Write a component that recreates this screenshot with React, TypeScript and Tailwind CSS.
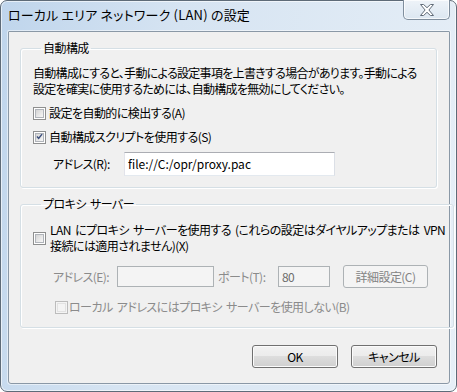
import React from "react";

type BoxProps = {
    checked?: boolean;
    disabled?: boolean;
};

function CheckBox({ checked, disabled }: BoxProps) {
    return (
        <span
            className={`flex h-[13px] w-[13px] shrink-0 items-center justify-center border ${
                disabled ? "border-[#bcbcbc] bg-[#f4f4f4]" : "border-[#8e8f8f] bg-white"
            }`}
        >
            <span
                className={`flex h-[9px] w-[9px] items-center justify-center border ${
                    disabled
                        ? "border-[#e2e2e2] bg-[#f4f4f4]"
                        : "border-[#b0b4ba] bg-[linear-gradient(135deg,#d4d4d4,#f7f7f7)]"
                }`}
            >
                {checked && (
                    <svg width="9" height="9" viewBox="0 0 9 9" className="-mt-[1px]">
                        <path
                            d="M1.2 4.6 L3.4 6.9 L7.8 1.4"
                            fill="none"
                            stroke="#3c4f7c"
                            strokeWidth="1.9"
                        />
                    </svg>
                )}
            </span>
        </span>
    );
}

function Button({ label, disabled, className = "" }: { label: string; disabled?: boolean; className?: string }) {
    return (
        <div
            className={`flex items-center justify-center rounded-[3px] border text-[12px] ${
                disabled
                    ? "border-[#adb2b5] bg-[#f4f4f4] text-[#838383]"
                    : "border-[#707070] bg-[linear-gradient(#f2f2f2_0%,#ebebeb_50%,#dddddd_50%,#cfcfcf_100%)] text-black shadow-[inset_0_0_0_1px_#fbfbfb]"
            } ${className}`}
        >
            {label}
        </div>
    );
}

function App() {
    return (
        <div className="h-[392px] w-[457px] font-['Noto_Sans_CJK_JP',sans-serif] [font-feature-settings:'palt'] text-[12px] leading-[16px] text-black">
            <div className="flex h-full w-full flex-col rounded-[7px] border border-[#5e6b78] bg-[linear-gradient(100deg,#bfd5ec_0%,#d6e4f2_35%,#e7eff7_100%)] pb-[7px] pl-[7px] pr-[6px] shadow-[inset_0_0_0_1px_rgba(255,255,255,0.6)]">
                {/* title bar */}
                <div className="flex h-[30px] shrink-0 items-start justify-between">
                    <div className="whitespace-nowrap pt-[5px] text-[13px] leading-[18px] tracking-[0.2px] text-black">
                        ローカル エリア ネットワーク (LAN) の設定
                    </div>
                    <div className="-mt-[1px] flex h-[20px] w-[47px] items-center justify-center rounded-b-[5px] border border-t-0 border-[#7f8e9d] bg-[linear-gradient(#eef3f8,#dce7f1)] shadow-[inset_0_0_0_1px_rgba(255,255,255,0.7)]">
                        <svg width="14" height="12" viewBox="0 0 14 12">
                            <polygon
                                points="0.5,0.5 3.6,0.5 7,3.7 10.4,0.5 13.5,0.5 8.9,6 13.5,11.5 10.4,11.5 7,8.3 3.6,11.5 0.5,11.5 5.1,6"
                                fill="#ffffff"
                                stroke="#606b77"
                                strokeWidth="1"
                            />
                        </svg>
                    </div>
                </div>

                {/* client area */}
                <div className="flex flex-1 flex-col whitespace-nowrap rounded-b-[3px] rounded-t-[1px] border border-[#8a98a6] bg-[#f0f0f0] pl-[11px] pr-[12px] tracking-[-0.55px] [word-spacing:2px] shadow-[0_0_0_1px_rgba(255,255,255,0.5)]">
                    <fieldset className="mt-[8px] rounded-[3px] border border-[#d5dfe5] pb-[11px] pl-[12px] pr-[8px] shadow-[1px_1px_0_#ffffff,inset_1px_1px_0_#ffffff]">
                        <legend className="ml-[8px] px-[2px]">自動構成</legend>
                        <div className="mt-[9px] tracking-[-0.7px]">
                            自動構成にすると、手動による設定事項を上書きする場合があります。手動による
                            <br />
                            設定を確実に使用するためには、自動構成を無効にしてください。
                        </div>
                        <div className="mt-[8px] flex h-[16px] items-center gap-[3px]">
                            <CheckBox />
                            <span>設定を自動的に検出する(A)</span>
                        </div>
                        <div className="mt-[8px] flex h-[16px] items-center gap-[3px]">
                            <CheckBox checked />
                            <span>自動構成スクリプトを使用する(S)</span>
                        </div>
                        <div className="mt-[7px] flex h-[24px] items-center pl-[20px]">
                            <span className="w-[71px]">アドレス(R):</span>
                            <div className="flex h-[24px] w-[211px] items-center border border-[#abadb3] border-b-[#e3e9ef] border-l-[#e2e3ea] border-r-[#dbdfe6] bg-white pl-[3px] tracking-normal">
                                file://C:/opr/proxy.pac
                            </div>
                        </div>
                    </fieldset>

                    <fieldset className="mt-[8px] rounded-[3px] border border-[#d5dfe5] pb-[12px] pl-[12px] pr-[8px] shadow-[1px_1px_0_#ffffff,inset_1px_1px_0_#ffffff]">
                        <legend className="ml-[8px] px-[2px]">プロキシ サーバー</legend>
                        <div className="mt-[10px] flex items-center gap-[4px]">
                            <CheckBox />
                            <span>
                                LAN にプロキシ サーバーを使用する (これらの設定はダイヤルアップまたは VPN
                                <br />
                                接続には適用されません)(X)
                            </span>
                        </div>
                        <div className="mt-[11px] flex h-[23px] items-center pl-[20px] text-[#8b8b8b]">
                            <span className="w-[64px]">アドレス(E):</span>
                            <div className="h-[21px] w-[97px] border border-[#adb2b5] bg-[#f4f4f4]" />
                            <span className="ml-[4px] w-[60px]">ポート(T):</span>
                            <div className="flex h-[21px] w-[52px] items-center border border-[#adb2b5] bg-[#f4f4f4] pl-[3px] text-[#6d6d6d]">
                                80
                            </div>
                            <Button label="詳細設定(C)" disabled className="ml-[13px] h-[23px] w-[85px]" />
                        </div>
                        <div className="mt-[11px] flex h-[16px] items-center gap-[1px] pl-[22px] text-[#8b8b8b]">
                            <CheckBox disabled />
                            <span>ローカル アドレスにはプロキシ サーバーを使用しない(B)</span>
                        </div>
                    </fieldset>

                    <div className="mt-[17px] flex justify-end gap-[13px]">
                        <Button label="OK" className="h-[23px] w-[86px]" />
                        <Button label="キャンセル" className="h-[23px] w-[86px]" />
                    </div>
                </div>
            </div>
        </div>
    );
}

export default App;
